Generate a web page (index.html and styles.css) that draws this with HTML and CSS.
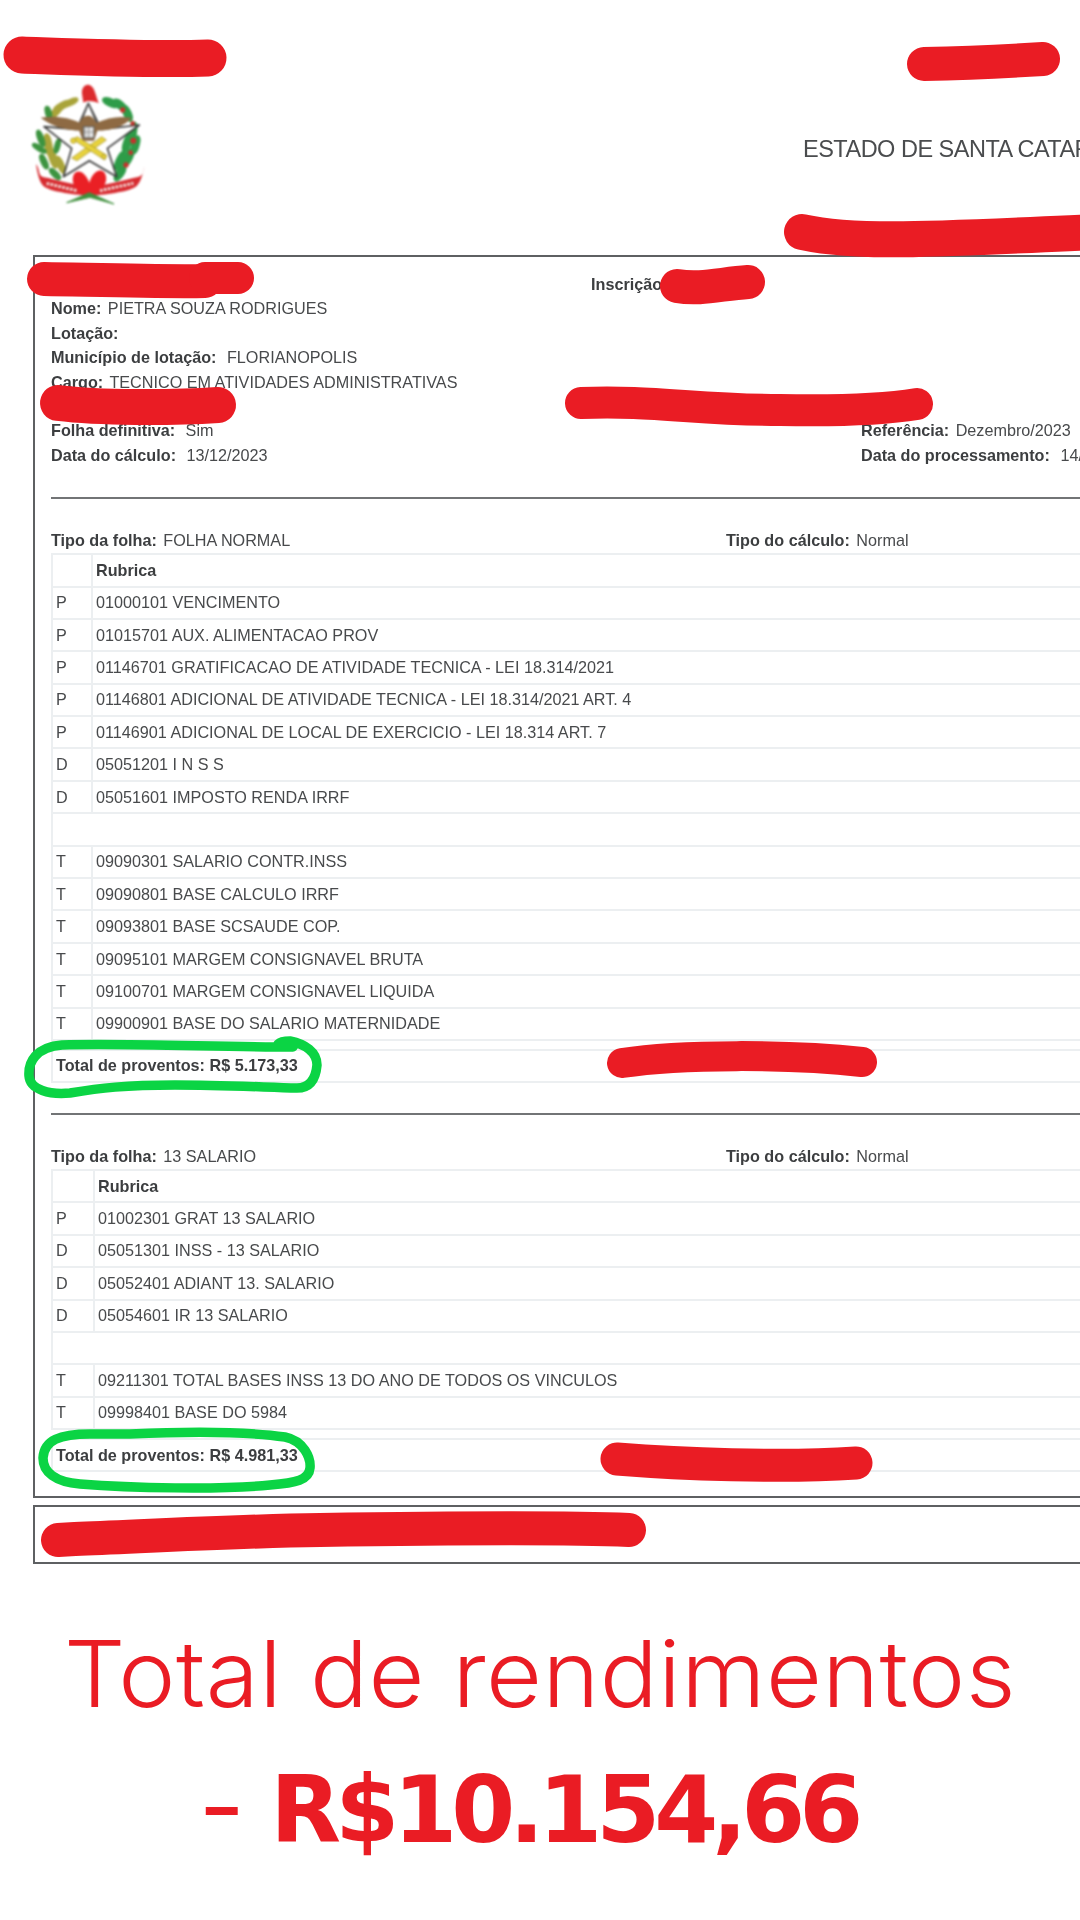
FILE: index.html
```html
<!DOCTYPE html>
<html lang="pt-BR">
<head>
<meta charset="utf-8">
<title>Folha de pagamento</title>
<link rel="stylesheet" href="styles.css">
</head>
<body>
<div class="page">
  <div class="doc-area">
    <header class="head">
      <svg class="crest" viewBox="0 0 420 420" aria-hidden="true">
        <g class="leaf-olive">
          <ellipse cx="150" cy="98" rx="24" ry="7" transform="rotate(-25 150 98)"/>
          <ellipse cx="125" cy="108" rx="26" ry="8" transform="rotate(-30 125 108)"/>
          <ellipse cx="108" cy="125" rx="26" ry="8" transform="rotate(-45 108 125)"/>
          <ellipse cx="85" cy="225" rx="9" ry="32" transform="rotate(-10 85 225)"/>
          <ellipse cx="98" cy="262" rx="9" ry="32" transform="rotate(-18 98 262)"/>
          <ellipse cx="122" cy="285" rx="8" ry="26" transform="rotate(-25 122 285)"/>
        </g>
        <g class="leaf-green">
          <ellipse cx="85" cy="128" rx="7" ry="18" transform="rotate(-15 85 128)"/>
          <ellipse cx="62" cy="205" rx="7" ry="24" transform="rotate(-20 62 205)"/>
          <ellipse cx="58" cy="235" rx="22" ry="6" transform="rotate(32 58 235)"/>
          <ellipse cx="112" cy="228" rx="6" ry="20" transform="rotate(15 112 228)"/>
          <ellipse cx="72" cy="275" rx="7" ry="22" transform="rotate(-25 72 275)"/>
          <ellipse cx="105" cy="312" rx="7" ry="20" transform="rotate(-45 105 312)"/>
        </g>
        <g class="leaf-bright">
          <ellipse cx="272" cy="98" rx="24" ry="9" transform="rotate(25 272 98)"/>
          <ellipse cx="300" cy="105" rx="22" ry="9" transform="rotate(40 300 105)"/>
          <ellipse cx="322" cy="130" rx="24" ry="9" transform="rotate(65 322 130)"/>
          <ellipse cx="338" cy="188" rx="9" ry="30" transform="rotate(10 338 188)"/>
          <ellipse cx="346" cy="225" rx="9" ry="26" transform="rotate(15 346 225)"/>
          <ellipse cx="322" cy="218" rx="9" ry="26" transform="rotate(20 322 218)"/>
          <ellipse cx="325" cy="262" rx="10" ry="28" transform="rotate(25 325 262)"/>
          <ellipse cx="300" cy="272" rx="9" ry="28" transform="rotate(25 300 272)"/>
          <ellipse cx="300" cy="310" rx="9" ry="24" transform="rotate(35 300 310)"/>
        </g>
        <path d="M205 100L244 178 358 165 262 235 290 320 208 272 130 320 155 235 72 170 170 178Z" fill="#fff" stroke="#3a3a3a" stroke-width="5" stroke-linejoin="round"/>
        <path d="M205 100L180 165M205 100L232 165" stroke="#555" stroke-width="4"/>
        <circle cx="308" cy="120" r="8" fill="#c5322c"/><circle cx="338" cy="160" r="7" fill="#c5322c"/><circle cx="340" cy="212" r="9" fill="#c5322c"/><circle cx="332" cy="248" r="7" fill="#c5322c"/><circle cx="318" cy="285" r="8" fill="#c5322c"/>
        <path d="M62 143C105 136 150 144 178 158 184 146 192 136 205 137 218 138 224 150 230 158 262 144 298 136 336 144 312 168 280 182 232 182L222 212H188L178 182C130 180 92 166 62 143Z" fill="#8e6a43"/>
        <rect x="190" y="170" width="32" height="34" fill="#e4e4e4" stroke="#555" stroke-width="3"/>
        <path d="M195 170v34M206 170v34M190 186h32" stroke="#777" stroke-width="2"/>
        <g stroke="#97851f" stroke-width="2" fill="#e8d33c">
          <path d="M245 200l14 10-88 62-16-8z"/>
          <path d="M158 208l14-8 88 56-6 14z"/>
          <circle cx="160" cy="212" r="8"/>
          <circle cx="252" cy="260" r="7"/>
        </g>
        <path d="M187 78C182 54 194 42 208 45 222 48 226 70 236 100 220 92 200 90 190 98Z" fill="#dc2a2d"/>
        <path d="M48 282C62 300 52 318 72 322 105 328 150 342 200 350L210 378C150 372 90 365 70 348 58 336 52 310 48 282ZM374 288C368 306 372 318 350 322 315 330 270 342 220 350L210 378C270 372 330 365 350 348 362 336 368 314 374 288Z" fill="#d72b30"/>
        <path d="M206 378C168 368 150 338 162 312 176 294 198 310 208 338 216 310 236 292 252 306 270 330 250 368 206 378Z" fill="#ea2025"/>
        <path d="M80 340L170 362M240 362L340 340" stroke="#f4e2de" stroke-width="9" stroke-dasharray="8 4"/>
        <path d="M140 398L208 368 282 402 210 382Z" fill="#3f8f3c" stroke="#3f8f3c" stroke-width="3"/>
      </svg>
      <h1 class="state">ESTADO DE SANTA CATARINA</h1>
    </header>

    <main class="doc">
      <section class="info">
        <div class="info-row"><span></span><p><b>Inscrição</b></p></div>
        <div class="info-row"><p><b>Nome:</b> PIETRA SOUZA RODRIGUES</p></div>
        <div class="info-row"><p><b>Lotação:</b></p></div>
        <div class="info-row"><p><b class="wide">Município de lotação:</b> FLORIANOPOLIS</p></div>
        <div class="info-row"><p><b>Cargo:</b> TECNICO EM ATIVIDADES ADMINISTRATIVAS</p></div>
        <div class="info-row"></div>
        <div class="info-row"><p><b class="wide">Folha definitiva:</b> Sim</p><span></span><p><b>Referência:</b> Dezembro/2023</p></div>
        <div class="info-row"><p><b class="wide">Data do cálculo:</b> 13/12/2023</p><span></span><p><b class="wide">Data do processamento:</b> 14/12/2023</p></div>
      </section>

      <hr class="rule">
      <div class="type-row"><p><b>Tipo da folha:</b> FOLHA NORMAL</p><p><b>Tipo do cálculo:</b> Normal</p></div>
      <table class="grid">
        <tr><td class="k"></td><td><b>Rubrica</b></td></tr>
        <tr><td class="k">P</td><td>01000101 VENCIMENTO</td></tr>
        <tr><td class="k">P</td><td>01015701 AUX. ALIMENTACAO PROV</td></tr>
        <tr><td class="k">P</td><td>01146701 GRATIFICACAO DE ATIVIDADE TECNICA - LEI 18.314/2021</td></tr>
        <tr><td class="k">P</td><td>01146801 ADICIONAL DE ATIVIDADE TECNICA - LEI 18.314/2021 ART. 4</td></tr>
        <tr><td class="k">P</td><td>01146901 ADICIONAL DE LOCAL DE EXERCICIO - LEI 18.314 ART. 7</td></tr>
        <tr><td class="k">D</td><td>05051201 I N S S</td></tr>
        <tr><td class="k">D</td><td>05051601 IMPOSTO RENDA IRRF</td></tr>
        <tr><td colspan="2"></td></tr>
        <tr><td class="k">T</td><td>09090301 SALARIO CONTR.INSS</td></tr>
        <tr><td class="k">T</td><td>09090801 BASE CALCULO IRRF</td></tr>
        <tr><td class="k">T</td><td>09093801 BASE SCSAUDE COP.</td></tr>
        <tr><td class="k">T</td><td>09095101 MARGEM CONSIGNAVEL BRUTA</td></tr>
        <tr><td class="k">T</td><td>09100701 MARGEM CONSIGNAVEL LIQUIDA</td></tr>
        <tr><td class="k">T</td><td>09900901 BASE DO SALARIO MATERNIDADE</td></tr>
      </table>
      <table class="grid totals"><tr><td><b>Total de proventos: R$ 5.173,33</b></td></tr></table>

      <hr class="rule">
      <div class="type-row"><p><b>Tipo da folha:</b> 13 SALARIO</p><p><b>Tipo do cálculo:</b> Normal</p></div>
      <table class="grid wide-key">
        <tr><td class="k"></td><td><b>Rubrica</b></td></tr>
        <tr><td class="k">P</td><td>01002301 GRAT 13 SALARIO</td></tr>
        <tr><td class="k">D</td><td>05051301 INSS - 13 SALARIO</td></tr>
        <tr><td class="k">D</td><td>05052401 ADIANT 13. SALARIO</td></tr>
        <tr><td class="k">D</td><td>05054601 IR 13 SALARIO</td></tr>
        <tr><td colspan="2"></td></tr>
        <tr><td class="k">T</td><td>09211301 TOTAL BASES INSS 13 DO ANO DE TODOS OS VINCULOS</td></tr>
        <tr><td class="k">T</td><td>09998401 BASE DO 5984</td></tr>
      </table>
      <table class="grid totals"><tr><td><b>Total de proventos: R$ 4.981,33</b></td></tr></table>
    </main>
    <div class="foot-box"></div>
  </div>

  <footer class="summary">
    <p class="summary-label">Total de rendimentos</p>
    <p class="summary-value"><span class="dash">-</span> <strong>R$10.154,66</strong></p>
  </footer>

  <svg class="marks" viewBox="0 0 1080 1920" aria-hidden="true">
    <g class="redact">
      <path stroke-width="37" d="M22 55C80 57 150 60 208 58"/>
      <path stroke-width="34" d="M924 64C970 63 1010 61 1043 59"/>
      <path stroke-width="36" d="M802 232C860 245 950 238 1100 232"/>
      <path stroke-width="34" d="M44 279C100 280 170 282 205 281"/>
      <path stroke-width="32" d="M205 278H238"/>
      <path stroke-width="34" d="M677 286C700 290 720 284 748 282"/>
      <path stroke-width="36" d="M58 403C100 408 170 408 218 405"/>
      <path stroke-width="32" d="M581 403C650 400 700 410 780 410C830 411 880 410 917 404"/>
      <path stroke-width="30" d="M622 1063C680 1054 790 1054 862 1062"/>
      <path stroke-width="33" d="M617 1459C680 1464 780 1468 856 1463"/>
      <path stroke-width="34" d="M58 1540L75 1539C150 1536 240 1531 320 1530C450 1528 560 1527 629 1530"/>
    </g>
    <g class="circle">
      <path d="M293 1047C220 1047 120 1043 62 1045C36 1047 28 1062 29 1076C30 1090 50 1095 70 1093C100 1088 125 1085 175 1085C220 1085 260 1087 297 1088C312 1088 316 1076 317 1065C317 1052 305 1044 290 1041C284 1041 280 1042 278 1044"/>
      <path d="M130 1434C200 1431 250 1432 285 1437C304 1441 311 1458 310 1468C309 1480 296 1483 270 1485C220 1490 130 1488 80 1484C55 1482 43 1472 43 1458C44 1440 60 1434 90 1434Z"/>
    </g>
  </svg>
</div>
</body>
</html>
```
FILE: styles.css
```css
* { box-sizing: border-box; }
html, body { margin: 0; padding: 0; background: #fff; }
.page {
  position: relative;
  width: 1080px;
  height: 1920px;
  overflow: hidden;
  background: #fff;
  font-family: "Liberation Sans", Arial, sans-serif;
  color: #484a4c;
}
.doc-area { width: 1240px; filter: blur(0.4px); }
p { margin: 0; }
b { font-weight: 700; color: #3c3e40; margin-right: 2px; }
b.wide { margin-right: 6px; }

.head { display: flex; align-items: flex-start; height: 255px; padding: 70px 0 0 20px; }
.crest { width: 140px; height: 140px; flex: none; filter: blur(0.8px); }
.leaf-olive { fill: #a9a43a; stroke: #a9a43a; stroke-width: 7; }
.leaf-green { fill: #3d9440; stroke: #3d9440; stroke-width: 7; }
.leaf-bright { fill: #2e9c48; stroke: #2e9c48; stroke-width: 8; }
.state { margin: 64px 0 0 643px; font-size: 23.5px; font-weight: 400; line-height: 30px; letter-spacing: -0.5px; white-space: nowrap; color: #4a4c4e; }

.doc {
  margin-left: 33px;
  width: 1200px;
  height: 1243px;
  border: 2px solid #5e6062;
  padding: 15px 16px 0;
  font-size: 16.2px;
}
.info-row {
  display: grid;
  grid-template-columns: 540px 270px 1fr;
  height: 24.4px;
  line-height: 24.4px;
  white-space: nowrap;
}
.rule { margin: 30px 0; height: 2px; border: 0; background: #727476; width: 1168px; }
.type-row {
  display: grid;
  grid-template-columns: 675px 1fr;
  height: 24px;
  line-height: 22px;
}
.grid {
  width: 1168px;
  border-collapse: collapse;
  table-layout: fixed;
}
.grid td {
  height: 32.4px;
  padding: 0 3px 1px;
  border: 2px solid #eceff1;
  line-height: 20px;
  vertical-align: middle;
  white-space: nowrap;
}
.grid td.k { width: 40px; }
.wide-key td.k { width: 42px; }
.totals { margin-top: 8px; }
.totals td { height: 32px; }
.foot-box {
  margin: 7px 0 0 33px;
  width: 1200px;
  height: 59px;
  border: 2px solid #5e6062;
}

.summary { color: #ea1c24; text-align: center; margin-top: 44px; }
.summary-label { font-family: Inter, sans-serif; font-weight: 300; font-size: 92px; line-height: 132px; letter-spacing: 0.4px; white-space: nowrap; transform: scaleX(1.05); }
.summary-value { font-size: 92px; line-height: 132px; white-space: nowrap; padding-right: 24px; }
.dash { font-family: Inter, sans-serif; font-weight: 400; font-size: 100px; }
.summary-value strong { font-family: "DejaVu Sans", sans-serif; font-weight: 700; letter-spacing: -6px; }

.marks { position: absolute; left: 0; top: 0; width: 1080px; height: 1920px; pointer-events: none; }
.redact path { fill: none; stroke: #ea1c24; stroke-linecap: round; stroke-linejoin: round; }
.circle path { fill: none; stroke: #0bd444; stroke-width: 9.5; stroke-linecap: round; stroke-linejoin: round; }
```
